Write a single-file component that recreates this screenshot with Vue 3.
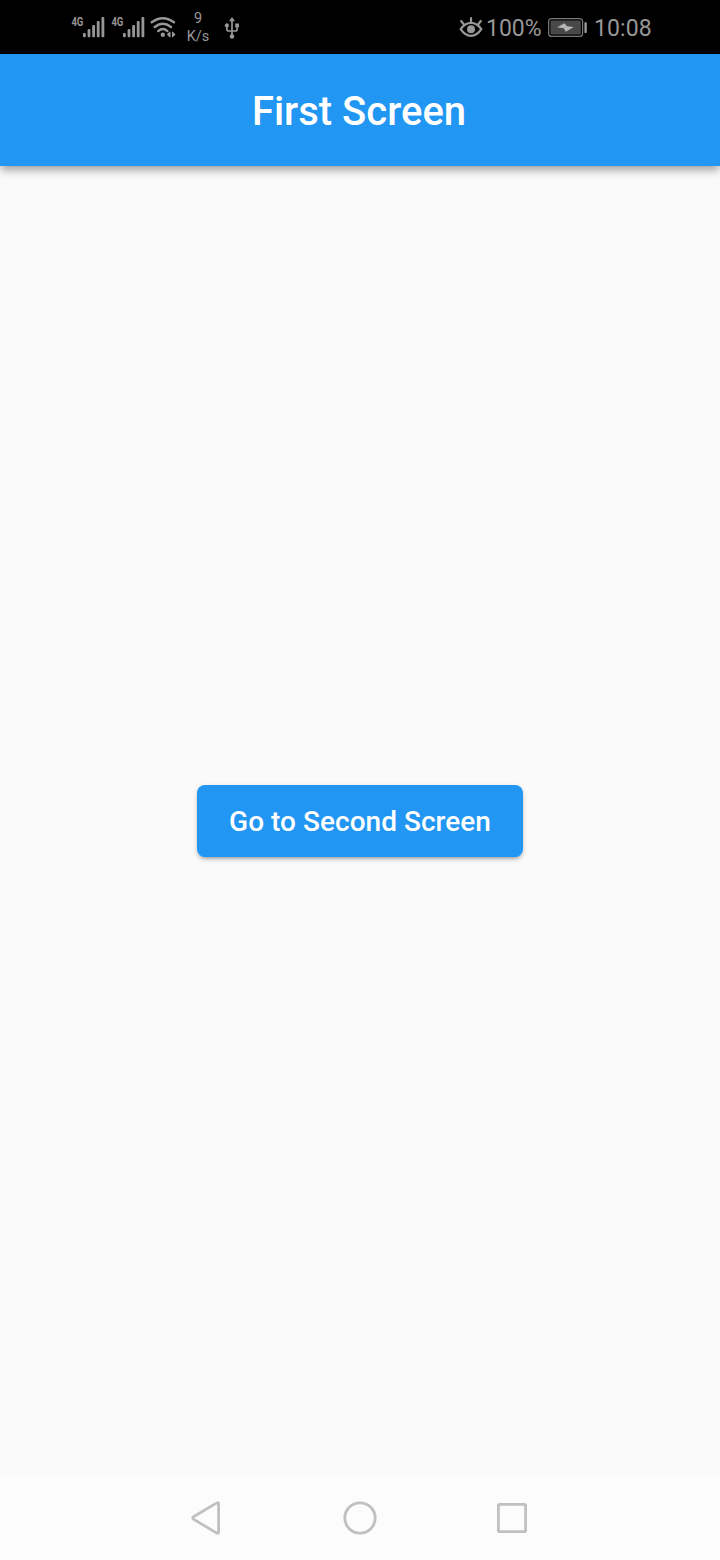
<script setup>
const bars = [
  { x: 12, y: 33 },
  { x: 16.6, y: 29 },
  { x: 21.2, y: 25 },
  { x: 25.8, y: 21 },
  { x: 30.5, y: 17 },
]
</script>

<template>
  <div class="screen">
    <header class="status">
      <svg v-for="n in 2" :key="n" class="signal" width="34" height="54" viewBox="0 0 34 54">
        <text x="0.4" y="26" textLength="12" lengthAdjust="spacingAndGlyphs">4G</text>
        <rect v-for="b in bars" :key="b.x" :x="b.x" :y="b.y" width="2.8" :height="37.3 - b.y" rx="1" />
      </svg>
      <svg class="wifi" width="26" height="54" viewBox="150 0 26 54">
        <g fill="none" stroke="#979797" stroke-width="2.4" stroke-linecap="round">
          <path d="M151.7 22.3Q162.8 14.2 174 22.3" />
          <path d="M154.7 27Q162.8 20.6 171 27" />
          <path d="M158.2 31.1Q162.8 27.1 167.4 31.1" />
        </g>
        <circle cx="162.8" cy="34.8" r="2.2" />
        <path d="M170.5 31.8V37.2H169.5L166.8 34.5L169.5 31.8ZM172 31.8V37.2H172.8L175.5 34.5L172.8 31.8Z" />
      </svg>
      <div class="speed"><span>9</span><span>K/s</span></div>
      <svg class="usb" width="16" height="54" viewBox="224 0 16 54">
        <g fill="none" stroke="#979797" stroke-width="1.7">
          <path d="M232 20V36M226.9 26V29.2Q226.9 31 228.7 31H235.3Q237.1 31 237.1 29.2V26" />
        </g>
        <path d="M232 17L235 21.3H229Z" />
        <circle cx="226.9" cy="25.4" r="2.1" />
        <rect x="235.2" y="23.5" width="3.8" height="3.8" />
        <circle cx="232" cy="36.5" r="2.3" />
      </svg>
      <svg class="eye" width="24" height="54" viewBox="459 0 24 54">
        <g fill="none" stroke="#979797" stroke-width="2.2" stroke-linecap="round">
          <path d="M460.7 29.2Q465 22.8 471 22.8T481.3 29.2Q477 35.8 471 35.8T460.7 29.2Z" />
          <path d="M471 18V22M461.2 21L464.3 25M480.8 21L477.7 25" />
        </g>
        <circle cx="471" cy="29.2" r="4" />
      </svg>
      <span class="percent">100%</span>
      <svg class="battery" width="40" height="54" viewBox="548 0 40 54">
        <rect x="548.6" y="18.6" width="34" height="17.8" rx="3" fill="none" stroke="#777" stroke-width="1.2" />
        <rect x="550.4" y="20.4" width="30.4" height="14.2" rx="1.2" fill="#484848" />
        <path d="M557 27.3L564.6 23.2L567 26.2L573.8 27L565.8 31.8L563.8 28.3Z" fill="#b5b5b5" />
        <rect x="584.4" y="22.2" width="2.4" height="10.8" rx=".8" />
      </svg>
      <span class="time">10:08</span>
    </header>
    <div class="appbar"><h1>First Screen</h1></div>
    <main class="body"><button class="go">Go to Second Screen</button></main>
    <nav class="nav">
      <svg width="34" height="38" viewBox="189 1499 34 38"><path d="M193.5 1516.8L216.8 1502.9Q218.6 1502 218.6 1504V1532Q218.6 1534 216.8 1533.1L193.5 1519.2Q192 1518 193.5 1516.8Z" /></svg>
      <svg width="38" height="38" viewBox="341 1499 38 38"><circle cx="360" cy="1518" r="15.2" /></svg>
      <svg width="34" height="38" viewBox="495 1499 34 38"><rect x="498.4" y="1504.4" width="27.2" height="27.2" rx="1.2" /></svg>
    </nav>
  </div>
</template>

<style>
body {
  margin: 0;
}
</style>

<style scoped>
.screen {
  width: 720px;
  height: 1560px;
  display: flex;
  flex-direction: column;
  background: #fafafa;
  font-family: Roboto, "Liberation Sans", sans-serif;
}
.status {
  height: 54px;
  flex: none;
  display: flex;
  background: #000;
  color: #979797;
  box-sizing: border-box;
  padding-left: 71px;
}
.status svg {
  flex: none;
  fill: #979797;
}
.signal {
  margin-right: 6px;
}
.signal text {
  font-size: 12px;
  font-weight: 700;
}
.wifi {
  margin-left: -1px;
}
.speed {
  width: 30px;
  margin-left: 7px;
  padding-top: 10px;
  display: flex;
  flex-direction: column;
  align-items: center;
  font-size: 14.5px;
  line-height: 18px;
}
.usb {
  margin-left: 11px;
}
.eye {
  margin-left: 219px;
}
.percent,
.time {
  font-size: 23px;
  line-height: 58px;
  white-space: nowrap;
}
.percent {
  width: 62px;
  margin-left: 3px;
}
.time {
  margin-left: 6px;
  letter-spacing: 0.1px;
}
.appbar {
  height: 112px;
  flex: none;
  display: flex;
  align-items: center;
  justify-content: center;
  box-sizing: border-box;
  padding: 4px 2px 0 0;
  background: #2196f3;
  box-shadow: 0 4px 8px -2px rgba(0, 0, 0, 0.2), 0 5px 9px rgba(0, 0, 0, 0.16), 0 2px 12px rgba(0, 0, 0, 0.1);
}
.appbar h1 {
  margin: 0;
  color: #fff;
  font-size: 40px;
  font-weight: 500;
  line-height: 48px;
}
.body {
  flex: 1;
  display: flex;
  align-items: center;
  justify-content: center;
}
.go {
  width: 326px;
  height: 72px;
  padding: 2px 0 0;
  border: 0;
  border-radius: 8px;
  background: #2196f3;
  color: #fff;
  font: 500 28px/36px Roboto, "Liberation Sans", sans-serif;
  letter-spacing: 0.03px;
  white-space: nowrap;
  box-shadow: 0 4px 3px -3px rgba(0, 0, 0, 0.2), 0 3px 4px rgba(0, 0, 0, 0.14), 0 1px 6px rgba(0, 0, 0, 0.08);
}
.nav {
  height: 84px;
  flex: none;
  display: flex;
  gap: 116px;
  align-items: center;
  box-sizing: border-box;
  padding-left: 189px;
  background: #fcfcfc;
}
.nav svg {
  flex: none;
  fill: none;
  stroke: #c0c0c0;
  stroke-width: 2.8;
}
.nav svg:nth-child(2) {
  margin-left: 2px;
}
</style>
